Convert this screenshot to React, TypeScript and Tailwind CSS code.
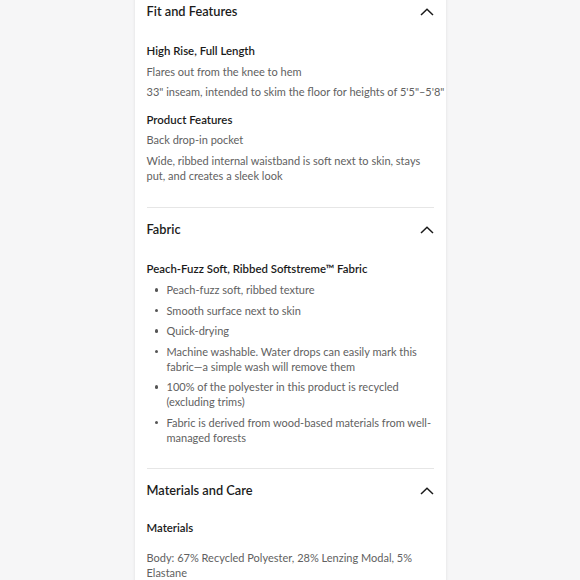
import React from "react";

function Chevron() {
  return (
    <svg width="14" height="8" viewBox="0 0 14 8" fill="none" className="shrink-0">
      <path d="M1 7L7 1.3L13 7" stroke="#1a1a1a" strokeWidth="1.5" />
    </svg>
  );
}

function Header({ title }: { title: string }) {
  return (
    <div className="h-[44px] flex items-center justify-between">
      <span className="text-[12.8px] font-semibold text-[#1b1b1b]">{title}</span>
      <Chevron />
    </div>
  );
}

function H({ children, className = "" }: { children: React.ReactNode; className?: string }) {
  return <p className={"text-[11.4px] leading-[15px] font-semibold text-[#1b1b1b] " + className}>{children}</p>;
}

function P({ children, className = "" }: { children: React.ReactNode; className?: string }) {
  return <p className={"text-[11px] leading-[15px] text-[#616161] " + className}>{children}</p>;
}

function Bullet({ children }: { children: React.ReactNode }) {
  return (
    <li className="flex text-[11px] leading-[15px] text-[#616161]">
      <span className="w-[20px] shrink-0 flex justify-center pt-[6px]">
        <span className="w-[3.5px] h-[3.5px] rounded-full bg-[#555]" />
      </span>
      <span>{children}</span>
    </li>
  );
}

export default function App() {
  return (
    <div
      className="w-[580px] h-[580px] overflow-hidden bg-[#f6f6f7] flex justify-center"
      style={{ fontFamily: "Lato, 'Noto Sans', sans-serif" }}
    >
      <div className="w-[311px] -mt-[10px] bg-white shadow-[0_0_3px_rgba(0,0,0,0.1)] px-[12px] self-start">
        <section className="pb-[24px]">
          <Header title="Fit and Features" />
          <div className="pt-[9px]">
            <H>High Rise, Full Length</H>
            <P className="mt-[6px]">Flares out from the knee to hem</P>
            <P className="mt-[5px] whitespace-nowrap">33" inseam, intended to skim the floor for heights of 5'5"–5'8"</P>
            <H className="mt-[13px]">Product Features</H>
            <P className="mt-[5px]">Back drop-in pocket</P>
            <P className="mt-[6px]">Wide, ribbed internal waistband is soft next to skin, stays put, and creates a sleek look</P>
          </div>
        </section>
        <div className="h-px bg-[#e6e6e6]" />
        <section className="pb-[23px]">
          <Header title="Fabric" />
          <div className="pt-[9px]">
            <H>Peach-Fuzz Soft, Ribbed Softstreme™ Fabric</H>
            <ul className="mt-[6px] flex flex-col gap-[5.5px]">
              <Bullet>Peach-fuzz soft, ribbed texture</Bullet>
              <Bullet>Smooth surface next to skin</Bullet>
              <Bullet>Quick-drying</Bullet>
              <Bullet>Machine washable. Water drops can easily mark this fabric—a simple wash will remove them</Bullet>
              <Bullet>100% of the polyester in this product is recycled (excluding trims)</Bullet>
              <Bullet>Fabric is derived from wood-based materials from well-managed forests</Bullet>
            </ul>
          </div>
        </section>
        <div className="h-px bg-[#e6e6e6]" />
        <section className="pb-[23px]">
          <Header title="Materials and Care" />
          <div className="pt-[7px]">
            <H>Materials</H>
            <P className="mt-[15px]">Body: 67% Recycled Polyester, 28% Lenzing Modal, 5% Elastane</P>
          </div>
        </section>
      </div>
    </div>
  );
}
